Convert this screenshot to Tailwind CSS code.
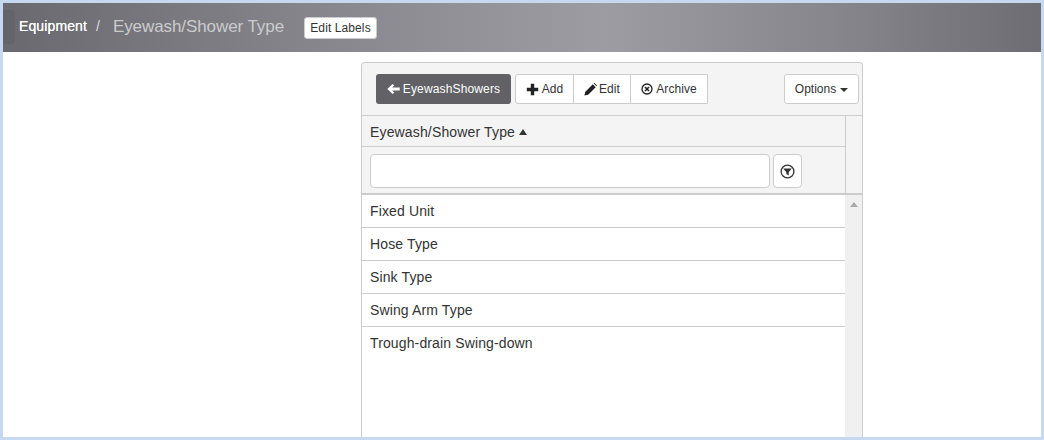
<!DOCTYPE html>
<html lang="en">
<head>
  <meta charset="UTF-8" />
  <title>Eyewash/Shower Type</title>
  <script src="https://cdn.jsdelivr.net/npm/@tailwindcss/browser@4"></script>
</head>
<body class="bg-white font-['Liberation_Sans',Arial,sans-serif] text-[#333] overflow-hidden">
  <div class="w-[1044px] h-[440px] border-[3px] border-[#c6d9f1] flex flex-col overflow-hidden">

    <!-- title bar -->
    <div class="relative h-[49px] shrink-0 flex items-center pl-[16px] pb-[2px] bg-[linear-gradient(to_right,#69696f_0%,#8a8a90_35%,#9c9ca2_58%,#86868c_80%,#6d6d73_100%)]">
      <div class="absolute left-0 top-[7px] w-[12px] h-[34px] rounded-r-[4px] bg-black/5"></div>
      <span class="relative text-white text-[14px] tracking-[0.12px] [text-shadow:0_0_0.6px_white]">Equipment</span>
      <span class="text-[#ddd] text-[14px] ml-[9px]">/</span>
      <span class="text-[#ccc] text-[17px] ml-[13px] tracking-[-0.08px]">Eyewash/Shower Type</span>
      <button class="ml-[20px] mt-[2px] h-[22px] w-[73px] bg-white border border-[#ccc] rounded-[3px] text-[12px] tracking-[0.1px] text-[#333] leading-none">Edit Labels</button>
    </div>

    <!-- panel -->
    <div class="ml-[358px] mt-[10px] w-[502px] flex-1 border-x border-t border-[#ccc] rounded-t-[4px] flex flex-col min-h-0">
      <div class="h-[53px] shrink-0 bg-[#f4f4f4] border-b border-[#ccc] rounded-t-[4px] flex items-center pl-[14px] pr-[3px]">
        <button class="h-[30px] w-[135px] bg-[#616166] rounded-[3px] text-white text-[12px] tracking-[0.15px] flex items-center justify-center gap-[3px]">
          <svg width="13" height="12" viewBox="0 0 13 12" fill="white"><path d="M0.3 6 5.6 0.9 7.3 2.6 5.1 4.6H12.7V7.4H5.1L7.3 9.4 5.6 11.1Z"/></svg>
          <span>EyewashShowers</span>
        </button>
        <div class="ml-[4px] h-[30px] flex bg-white border border-[#ccc] rounded-l-[3px] text-[12px] tracking-[0.05px]">
          <button class="w-[58px] flex items-center justify-center gap-[3px] border-r border-[#ccc]">
            <svg width="13" height="13" viewBox="0 0 13 13" fill="#222"><path d="M4.8 0.8H8.2V4.8H12.2V8.2H8.2V12.2H4.8V8.2H0.8V4.8H4.8Z"/></svg>
            <span>Add</span>
          </button>
          <button class="w-[57px] flex items-center justify-center gap-[2px] border-r border-[#ccc]">
            <svg width="13" height="13" viewBox="0 0 13 13" fill="#222"><path d="M0.4 12.6 1.3 8.8 8.8 1.3 11.7 4.2 4.2 11.7ZM9.7 0.6 10.5 0.1 12.9 2.5 12.4 3.3Z"/></svg>
            <span>Edit</span>
          </button>
          <button class="w-[76px] flex items-center justify-center gap-[3px]">
            <svg width="12" height="12" viewBox="0 0 12 12" fill="none" stroke="#222"><circle cx="6" cy="6" r="5" stroke-width="1.3"/><path d="M4 4 8 8M8 4 4 8" stroke-width="1.6"/></svg>
            <span>Archive</span>
          </button>
        </div>
        <button class="ml-auto h-[30px] w-[75px] bg-white border border-[#ccc] rounded-[3px] text-[12px] flex items-center justify-center gap-[4px]">
          <span>Options</span>
          <span class="w-0 h-0 border-x-[4px] border-x-transparent border-t-[4px] border-t-[#333] mt-[2px]"></span>
        </button>
      </div>

      <!-- column header and filter -->
      <div class="h-[79px] shrink-0 flex bg-[#f4f4f4] border-b-[2px] border-[#ccc]">
        <div class="w-[484px] border-r border-[#ccc] flex flex-col">
          <div class="h-[31px] shrink-0 border-b border-[#ccc] flex items-center pl-[8px] pt-[2px] text-[14px] tracking-[0.15px]">
            <span>Eyewash/Shower Type</span>
            <span class="ml-[4px] w-0 h-0 border-x-[4px] border-x-transparent border-b-[6px] border-b-[#333]"></span>
          </div>
          <div class="flex-1 flex items-start pl-[8px] pt-[7px] gap-[3px]">
            <input type="text" class="w-[400px] h-[34px] bg-white border border-[#ccc] rounded-[4px]" />
            <button class="w-[29px] h-[34px] bg-white border border-[#ccc] rounded-[4px] flex items-center justify-center">
              <svg width="15" height="15" viewBox="0 0 15 15"><circle cx="7.5" cy="7.5" r="6.4" fill="none" stroke="#333" stroke-width="1.3"/><path d="M3.2 4.6H11.8L8.7 8.2V11.4L6.3 10V8.2Z" fill="#333"/></svg>
            </button>
          </div>
        </div>
      </div>

      <!-- rows -->
      <div class="flex-1 flex min-h-0">
        <div class="w-[483px] text-[14px] tracking-[0.13px]">
          <div class="h-[33px] border-b border-[#ccc] flex items-center pl-[8px]">Fixed Unit</div>
          <div class="h-[33px] border-b border-[#ccc] flex items-center pl-[8px]">Hose Type</div>
          <div class="h-[33px] border-b border-[#ccc] flex items-center pl-[8px]">Sink Type</div>
          <div class="h-[33px] border-b border-[#ccc] flex items-center pl-[8px]">Swing Arm Type</div>
          <div class="h-[33px] flex items-center pl-[8px]">Trough-drain Swing-down</div>
        </div>
        <div class="flex-1 bg-[#f0f0f0] flex justify-center pt-[7px]">
          <span class="w-0 h-0 border-x-[4px] border-x-transparent border-b-[5px] border-b-[#aaa]"></span>
        </div>
      </div>
    </div>
  </div>
</body>
</html>
